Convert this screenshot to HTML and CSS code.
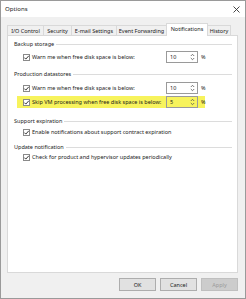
FILE: index.html
```html
<!DOCTYPE html>
<html>
<head>
<meta charset="utf-8">
<link rel="stylesheet" href="styles.css">
</head>
<body>
<div class="window">
  <div class="titlebar">
    <span class="title">Options</span>
    <svg class="close" width="7" height="7" viewBox="0 0 7 7"><path d="M0.5 0.5 L6.5 6.5 M6.5 0.5 L0.5 6.5" stroke="#333" stroke-width="0.9" fill="none"/></svg>
  </div>
  <div class="body">
    <div class="tabs">
      <div class="tab t1">I/O Control</div>
      <div class="tab t2">Security</div>
      <div class="tab t3">E-mail Settings</div>
      <div class="tab t4">Event Forwarding</div>
      <div class="tab t5 active">Notifications</div>
      <div class="tab t6">History</div>
    </div>
    <div class="panel">
      <div class="group g1"><span>Backup storage</span><i class="rule"></i></div>
      <div class="row r1">
        <span class="cb"><svg width="7" height="7" viewBox="0 0 7 7"><path d="M1.3 3.6 L2.8 5.1 L5.8 1.8" stroke="#222" stroke-width="0.9" fill="none"/></svg></span>
        <span class="label">Warn me when free disk space is below:</span>
        <span class="spin"><span class="val">10</span><svg class="arr" width="5" height="8" viewBox="0 0 5 8"><path d="M0.8 3 L2.5 1.3 L4.2 3 M0.8 5 L2.5 6.7 L4.2 5" stroke="#555" stroke-width="0.8" fill="none"/></svg></span>
        <span class="pct">%</span>
      </div>
      <div class="group g2"><span>Production datastores</span><i class="rule"></i></div>
      <div class="row r2">
        <span class="cb"><svg width="7" height="7" viewBox="0 0 7 7"><path d="M1.3 3.6 L2.8 5.1 L5.8 1.8" stroke="#222" stroke-width="0.9" fill="none"/></svg></span>
        <span class="label">Warn me when free disk space is below:</span>
        <span class="spin"><span class="val">10</span><svg class="arr" width="5" height="8" viewBox="0 0 5 8"><path d="M0.8 3 L2.5 1.3 L4.2 3 M0.8 5 L2.5 6.7 L4.2 5" stroke="#555" stroke-width="0.8" fill="none"/></svg></span>
        <span class="pct">%</span>
      </div>
      <div class="row r3 hl">
        <span class="cb"><svg width="7" height="7" viewBox="0 0 7 7"><path d="M1.3 3.6 L2.8 5.1 L5.8 1.8" stroke="#222" stroke-width="0.9" fill="none"/></svg></span>
        <span class="label">Skip VM processing when free disk space is below:</span>
        <span class="spin"><span class="val">5</span><svg class="arr" width="5" height="8" viewBox="0 0 5 8"><path d="M0.8 3 L2.5 1.3 L4.2 3 M0.8 5 L2.5 6.7 L4.2 5" stroke="#555" stroke-width="0.8" fill="none"/></svg></span>
        <span class="pct">%</span>
      </div>
      <div class="group g3"><span>Support expiration</span><i class="rule"></i></div>
      <div class="row r4 short">
        <span class="cb"><svg width="7" height="7" viewBox="0 0 7 7"><path d="M1.3 3.6 L2.8 5.1 L5.8 1.8" stroke="#222" stroke-width="0.9" fill="none"/></svg></span>
        <span class="text">Enable notifications about support contract expiration</span>
      </div>
      <div class="group g4"><span>Update notification</span><i class="rule"></i></div>
      <div class="row r5 short">
        <span class="cb"><svg width="7" height="7" viewBox="0 0 7 7"><path d="M1.3 3.6 L2.8 5.1 L5.8 1.8" stroke="#222" stroke-width="0.9" fill="none"/></svg></span>
        <span class="text">Check for product and hypervisor updates periodically</span>
      </div>
    </div>
    <div class="buttons">
      <div class="btn">OK</div>
      <div class="btn">Cancel</div>
      <div class="btn disabled">Apply</div>
    </div>
  </div>
</div>
</body>
</html>
```

FILE: styles.css
```css
html, body {
  margin: 0;
  padding: 0;
}
body {
  width: 246px;
  height: 299px;
  overflow: hidden;
  font-family: "Noto Sans", "Liberation Sans", sans-serif;
  font-size: 5.5px;
  color: #1a1a1a;
  background: #f0f0f0;
}
.window {
  width: 246px;
  height: 299px;
  box-sizing: border-box;
  border: 1px solid #9a9a9a;
  display: flex;
  flex-direction: column;
  background: #f0f0f0;
}
.titlebar {
  height: 16px;
  flex: none;
  background: #ffffff;
  display: flex;
  align-items: center;
  justify-content: space-between;
  padding: 0 4px 0 4px;
}
.title {
  font-size: 6.1px;
  line-height: 16px;
}
.close {
  display: block;
  margin-right: 1px;
}
.body {
  flex: 1;
  padding: 0 7px 0 6px;
  display: flex;
  flex-direction: column;
}
.tabs {
  margin-top: 6px;
  height: 12px;
  display: flex;
  align-items: flex-end;
  position: relative;
  z-index: 1;
}
.tab {
  box-sizing: border-box;
  height: 10px;
  border: 1px solid #d9d9d9;
  border-bottom: none;
  margin-right: -1px;
  background: #f0f0f0;
  display: flex;
  align-items: center;
  justify-content: center;
  line-height: 8px;
  white-space: nowrap;
}
.t1 { width: 37px; }
.t2 { width: 29px; }
.t3 { width: 46px; }
.t4 { width: 51px; }
.t5 { width: 42px; }
.t6 { width: 24px; }
.tab.active {
  height: 13px;
  margin-bottom: -1px;
  background: #ffffff;
  padding-bottom: 2px;
}
.panel {
  box-sizing: border-box;
  height: 238px;
  flex: none;
  background: #ffffff;
  border: 1px solid #d9d9d9;
  padding-top: 4px;
}
.group {
  display: flex;
  align-items: center;
  height: 8px;
  line-height: 8px;
  padding: 0 5px 0 6px;
}
.group span {
  white-space: nowrap;
}
.rule {
  flex: 1;
  height: 1px;
  background: #dcdcdc;
  margin-left: 2px;
  margin-top: 1px;
}
.g2 { margin-top: 7px; }
.g3 { margin-top: 9px; }
.g4 { margin-top: 7px; }
.row {
  display: flex;
  align-items: center;
  margin-left: 9px;
  width: 188px;
  box-sizing: border-box;
  padding-left: 6px;
  height: 12px;
  white-space: nowrap;
}
.row.short {
  height: 8px;
}
.r1 { margin-top: 3px; }
.r2 { margin-top: 4px; }
.r3 { margin-top: 2px; }
.r4 { margin-top: 3px; }
.r5 { margin-top: 2px; }
.hl {
  background: #f7f35c;
}
.cb {
  box-sizing: border-box;
  width: 7px;
  height: 7px;
  border: 1px solid #8a8a8a;
  background: #ffffff;
  flex: none;
  margin-right: 2px;
  position: relative;
}
.cb svg {
  display: block;
  margin: -1px 0 0 -1px;
}
.label {
  width: 134px;
  flex: none;
}
.spin {
  box-sizing: border-box;
  width: 32px;
  height: 12px;
  border: 1px solid #9a9a9a;
  background: #ffffff;
  display: flex;
  align-items: center;
  justify-content: space-between;
  padding: 0 2px 0 3px;
  flex: none;
}
.hl .spin {
  background: #f7f35c;
}
.arr {
  display: block;
}
.pct {
  margin-left: 3px;
}
.buttons {
  margin-top: 5px;
  display: flex;
  justify-content: flex-end;
  gap: 4px;
}
.btn {
  box-sizing: border-box;
  width: 37px;
  height: 13px;
  background: #e1e1e1;
  border: 1px solid #adadad;
  display: flex;
  align-items: center;
  justify-content: center;
}
.btn.disabled {
  background: #cccccc;
  border-color: #bfbfbf;
  color: #9a9a9a;
}
```
